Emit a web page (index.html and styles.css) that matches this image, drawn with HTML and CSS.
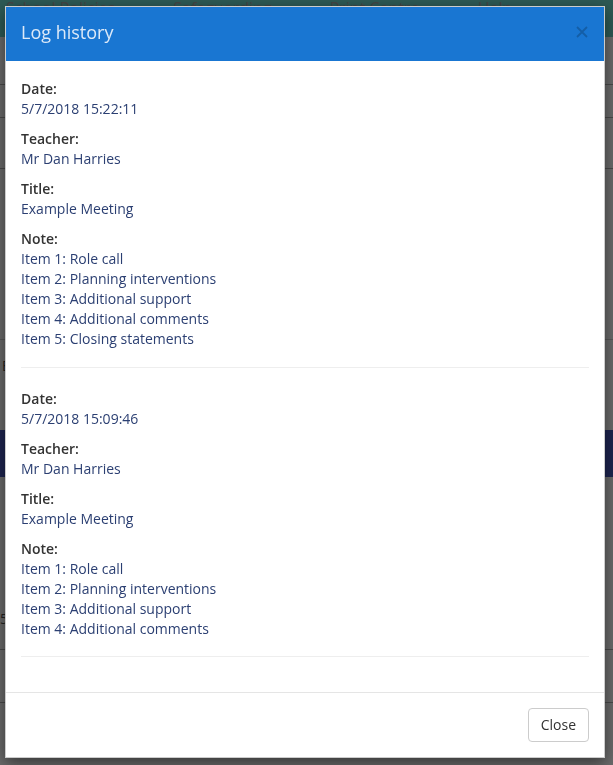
FILE: index.html
```html
<!DOCTYPE html>
<html lang="en">
<head>
<meta charset="utf-8">
<title>Log history</title>
<link rel="stylesheet" href="styles.css">
</head>
<body>
<div class="page">
  <nav class="topnav">
    <span class="navlink">School Policies</span>
    <span class="navlink">Safeguarding</span>
    <span class="navlink">Print Centre</span>
    <span class="navlink">Help</span>
  </nav>
  <div class="row r1"></div>
  <div class="row r2"></div>
  <div class="row r3"></div>
  <div class="row r4"></div>
  <div class="gap"><span class="peek">Edit</span></div>
  <div class="band"></div>
  <div class="row r5"><span class="peek peek-low">5/7</span></div>
  <div class="row r6"></div>
  <div class="row r7"></div>
</div>

<div class="backdrop"></div>

<div class="modal">
  <div class="modal-header">
    <button class="close" type="button" aria-label="Close">
      <svg width="12" height="12" viewBox="0 0 12 12"><path d="M1 1 L11 11 M11 1 L1 11" stroke="currentColor" stroke-width="1.8" fill="none"/></svg>
    </button>
    <h4 class="modal-title">Log history</h4>
  </div>
  <div class="modal-body">
    <div class="entry">
      <div class="field"><div class="label">Date:</div><div class="value">5/7/2018 15:22:11</div></div>
      <div class="field"><div class="label">Teacher:</div><div class="value">Mr Dan Harries</div></div>
      <div class="field"><div class="label">Title:</div><div class="value">Example Meeting</div></div>
      <div class="field"><div class="label">Note:</div>
        <div class="value">Item 1: Role call<br>Item 2: Planning interventions<br>Item 3: Additional support<br>Item 4: Additional comments<br>Item 5: Closing statements</div>
      </div>
    </div>
    <hr class="divider">
    <div class="entry">
      <div class="field"><div class="label">Date:</div><div class="value">5/7/2018 15:09:46</div></div>
      <div class="field"><div class="label">Teacher:</div><div class="value">Mr Dan Harries</div></div>
      <div class="field"><div class="label">Title:</div><div class="value">Example Meeting</div></div>
      <div class="field"><div class="label">Note:</div>
        <div class="value">Item 1: Role call<br>Item 2: Planning interventions<br>Item 3: Additional support<br>Item 4: Additional comments</div>
      </div>
    </div>
    <hr class="divider divider-last">
  </div>
  <div class="modal-footer">
    <button class="btn" type="button">Close</button>
  </div>
</div>
</body>
</html>
```

FILE: styles.css
```css
* { box-sizing: border-box; }

html, body {
  margin: 0;
  padding: 0;
  height: 100%;
  overflow: hidden;
}

body {
  font-family: "Open Sans", "Liberation Sans", sans-serif;
  font-size: 14px;
  line-height: 20px;
  color: #333;
  background: #d6d6d6;
}

/* underlying page */
.page {
  display: flex;
  flex-direction: column;
}

.topnav {
  height: 37px;
  background: #5cb4aa;
  display: flex;
  gap: 58px;
  padding: 0 0 0 6px;
  align-items: flex-start;
}

.navlink {
  font-size: 16px;
  line-height: 16px;
  color: #8a8a8a;
}

.row {
  border-bottom: 1px solid #949494;
}
.r1 { height: 48px; }
.r2 { height: 33px; }
.r3 { height: 51px; }
.r4 { height: 171px; border-bottom-color: #b0b0b0; }
.gap { height: 90px; }
.band { height: 47px; background: #3c4aa0; }
.r5 { height: 173px; }
.r6 { height: 53px; }
.r7 { height: 63px; border-bottom: none; }

.peek {
  display: block;
  padding: 16px 0 0 2px;
  color: #444;
}
.peek-low { padding: 132px 0 0 0; }

.backdrop {
  position: fixed;
  inset: 0;
  background: rgba(0, 0, 0, 0.5);
}

/* modal */
.modal {
  position: fixed;
  top: 6px;
  left: 5px;
  width: 600px;
  background: #fff;
  border: 1px solid rgba(0, 0, 0, 0.2);
  box-shadow: 0 5px 15px rgba(0, 0, 0, 0.5);
}

.modal-header {
  background: #1976d2;
  padding: 13px 15px 16px 15px;
}

.modal-title {
  margin: 0;
  font-size: 18px;
  line-height: 25px;
  font-weight: 400;
  color: #dce9f8;
}

.close {
  float: right;
  margin: 6px 1px 0 0;
  padding: 0;
  border: 0;
  background: transparent;
  display: flex;
  color: #000;
  opacity: 0.2;
}

.modal-body {
  padding: 18px 15px 13px 15px;
}

.field + .field { margin-top: 10px; }

.label {
  font-weight: 600;
  color: #333;
}

.value {
  color: #2b3f72;
}

.divider {
  margin: 18px 0 21px 0;
  border: 0;
  border-top: 1px solid #eee;
}

.divider-last {
  margin: 17px 0 22px 0;
}

.modal-footer {
  border-top: 1px solid #e5e5e5;
  padding: 15px;
  display: flex;
  justify-content: flex-end;
}

.btn {
  font-family: "Open Sans", "Liberation Sans", sans-serif;
  font-size: 14px;
  line-height: 20px;
  padding: 6px 12px;
  color: #333;
  background: #fff;
  border: 1px solid #ccc;
  border-radius: 4px;
}
```
